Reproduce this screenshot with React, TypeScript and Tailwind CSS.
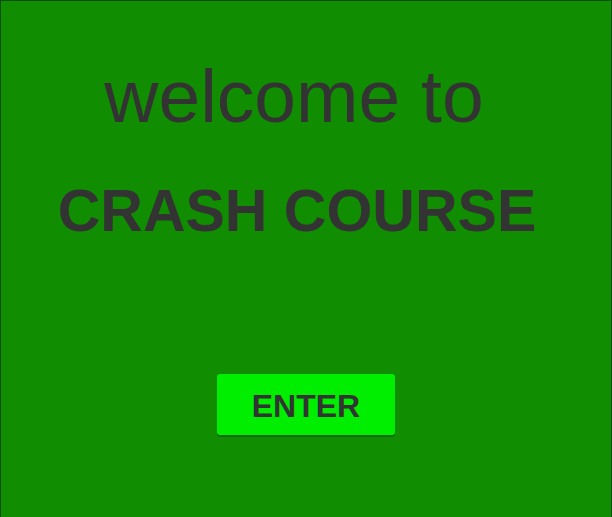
import React from 'react';

export default function App() {
  return (
    <div className="h-[517px] w-[612px] overflow-hidden border-l border-r border-t border-[#0d4f12] bg-[#108d00] font-['Liberation_Sans',Arial,sans-serif] text-[#333333]">
      {/* Heading */}
      <div className="flex flex-col items-center pt-[58px]">
        <h1 className="pr-[24px] text-[75px] font-normal leading-none">welcome to</h1>
        <h2 className="mt-[48px] pr-[18px] text-[59px] font-bold leading-none">CRASH COURSE</h2>
      </div>

      {/* Enter button */}
      <div className="mt-[133px] flex justify-center">
        <button className="h-[61px] w-[178px] rounded-[3px] bg-[#00ee00] pt-[3px] text-[32px] font-bold leading-none text-[#333333] shadow-[0_2px_0_#0a6b0a]">
          ENTER
        </button>
      </div>
    </div>
  );
}
